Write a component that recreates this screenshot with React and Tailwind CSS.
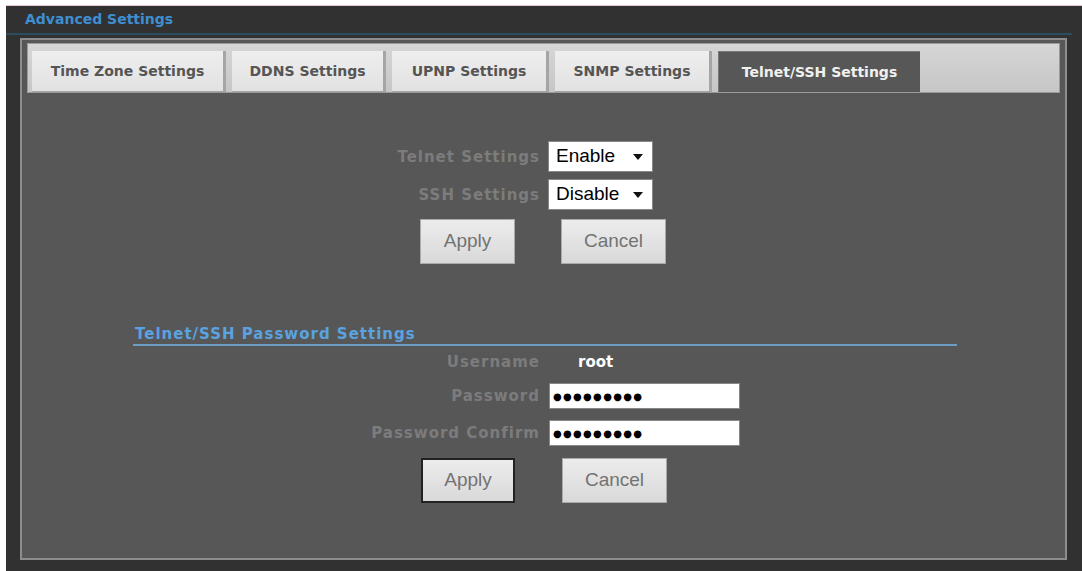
import React, { useState } from "react";

const tabs = [
  { name: "Time Zone Settings", w: "w-[194px]" },
  { name: "DDNS Settings", w: "w-[154px]" },
  { name: "UPNP Settings", w: "w-[157px]" },
  { name: "SNMP Settings", w: "w-[157px]" },
  { name: "Telnet/SSH Settings", w: "w-[202px]" },
];

const labelCls =
  "text-[15px] font-bold tracking-[1px] text-[#7c7c7c] text-right font-['DejaVu_Sans',Verdana,sans-serif] leading-[18px]";

const Select = ({ value }) => (
  <div className="w-[105px] h-[31px] bg-white border border-[#888] flex items-center justify-between pl-[7px] pr-[9px] text-[19px] text-black font-['Liberation_Sans',Arial,sans-serif]">
    <span>{value}</span>
    <svg width="10" height="6" viewBox="0 0 10 6">
      <path d="M0 0 L10 0 L5 6 Z" fill="#111" />
    </svg>
  </div>
);

const Button = ({ label, focused }) => (
  <button
    className={
      "h-[45px] bg-gradient-to-b from-[#ececec] to-[#d9d9d9] text-[19px] text-[#737373] font-['Liberation_Sans',Arial,sans-serif] " +
      (focused
        ? "w-[94px] border-2 border-[#222]"
        : label === "Apply"
        ? "w-[95px] border border-[#aaa]"
        : "w-[105px] border border-[#aaa]")
    }
  >
    {label}
  </button>
);

const Dots = () => (
  <div className="w-[191px] h-[26px] bg-white border border-[#888] flex items-center pl-[3px] text-[10px] tracking-[1.3px] text-black font-['DejaVu_Sans',sans-serif]">
    ●●●●●●●●●
  </div>
);

const App = () => {
  const [active] = useState(4);

  return (
    <div className="w-[1082px] h-[571px] bg-white pt-[5px] pl-[6px] overflow-hidden">
      <div className="h-[566px] bg-[#313131] border-t border-[#e8c8d0] flex flex-col">
        <div className="h-[27px] pl-[19px] flex items-center text-[14px] font-bold text-[#3d8fd1] font-['DejaVu_Sans',Verdana,sans-serif]">
          Advanced Settings
        </div>
        <div className="h-[2px] bg-[#2c4d5e] mr-[10px]" />
        <div className="mt-[3px] ml-[14px] mr-[15px] h-[522px] border-2 border-[#8d8d8d] bg-[#575757] flex flex-col">
          {/* tabs */}
          <div className="mt-[3px] mx-[5px] h-[50px] bg-gradient-to-b from-[#d6d6d6] to-[#c6c6c6] border border-[#9a9a9a] flex items-end pl-[4px] gap-[6px]">
            {tabs.map((t, i) => (
              <div
                key={t.name}
                className={
                  t.w +
                  " h-[41px] flex items-center justify-center text-[14px] font-bold font-['DejaVu_Sans',Verdana,sans-serif] " +
                  (i === active
                    ? "bg-[#575757] text-[#f0f0f0] border-t border-l border-[#777]"
                    : "bg-gradient-to-b from-[#eeeeee] to-[#e2e2e2] text-[#555] border-r-[3px] border-b border-[#a5a5a5]")
                }
              >
                {t.name}
              </div>
            ))}
          </div>

          {/* telnet / ssh */}
          <div className="mt-[48px] ml-[368px] flex flex-col gap-[7px]">
            <div className="flex items-center gap-[8px]">
              <div className={labelCls + " w-[150px]"}>Telnet Settings</div>
              <Select value="Enable" />
            </div>
            <div className="flex items-center gap-[8px]">
              <div className={labelCls + " w-[150px]"}>SSH Settings</div>
              <Select value="Disable" />
            </div>
          </div>
          <div className="mt-[9px] ml-[398px] flex gap-[46px]">
            <Button label="Apply" />
            <Button label="Cancel" />
          </div>

          {/* password section */}
          <div className="mt-[61px] ml-[111px] mr-[108px]">
            <div className="text-[15px] font-bold tracking-[1px] text-[#5aa2e0] font-['DejaVu_Sans',Verdana,sans-serif] pl-[2px] leading-[18px]">
              Telnet/SSH Password Settings
            </div>
            <div className="h-[2px] bg-[#6a9cc4] mt-[1px]" />
          </div>

          <div className="mt-[8px] ml-[333px] flex items-center h-[16px]">
            <div className={labelCls + " w-[185px]"}>Username</div>
            <div className="ml-[38px] text-[15px] font-bold text-white font-['DejaVu_Sans',Verdana,sans-serif] leading-[16px]">
              root
            </div>
          </div>
          <div className="mt-[13px] ml-[333px] flex flex-col gap-[11px]">
            <div className="flex items-center gap-[9px]">
              <div className={labelCls + " w-[185px]"}>Password</div>
              <Dots />
            </div>
            <div className="flex items-center gap-[9px]">
              <div className={labelCls + " w-[185px]"}>Password Confirm</div>
              <Dots />
            </div>
          </div>
          <div className="mt-[12px] ml-[399px] flex gap-[47px]">
            <Button label="Apply" focused />
            <Button label="Cancel" />
          </div>
        </div>
      </div>
    </div>
  );
};

export default App;
